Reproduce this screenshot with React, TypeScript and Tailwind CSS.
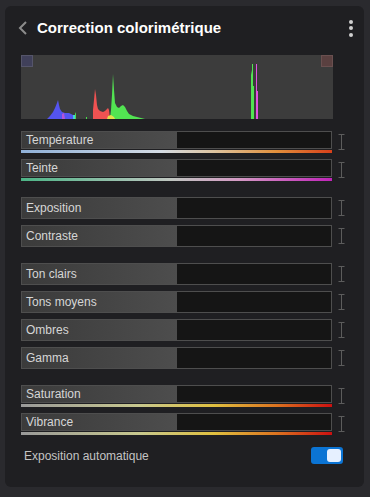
import { useState } from 'react'

type Reglage = {
  label: string
  track?: string
}

const groupes: Reglage[][] = [
  [
    {
      label: 'Température',
      track: 'bg-[linear-gradient(to_right,#8fb0d8,#d4dbe4_45%,#dcc3a0_62%,#e2903c_82%,#d8401a)]',
    },
    {
      label: 'Teinte',
      track: 'bg-[linear-gradient(to_right,#4cb486,#bfc6c0_48%,#d49ac4_70%,#c024b8)]',
    },
  ],
  [{ label: 'Exposition' }, { label: 'Contraste' }],
  [{ label: 'Ton clairs' }, { label: 'Tons moyens' }, { label: 'Ombres' }, { label: 'Gamma' }],
  [
    {
      label: 'Saturation',
      track: 'bg-[linear-gradient(to_right,#9a9a9a,#c8c88e_38%,#e0c040_62%,#dc7420_82%,#cc1010)]',
    },
    {
      label: 'Vibrance',
      track: 'bg-[linear-gradient(to_right,#9a9a9a,#c8c88e_38%,#e0c040_62%,#dc7420_82%,#cc1010)]',
    },
  ],
]

function IBeam() {
  return (
    <svg width="9" height="16" viewBox="0 0 9 16" className="shrink-0">
      <path d="M1.5 0.5h6M4.5 0.5v15M1.5 15.5h6" stroke="#5c5c5c" strokeWidth="1" fill="none" />
    </svg>
  )
}

function Histogramme() {
  return (
    <div className="relative w-[312px] h-[64px] bg-[#3c3c3c]">
      <svg width="312" height="64" viewBox="0 0 312 64" className="absolute inset-0">
        {/* bleu */}
        <path
          d="M26,64 L29,61 L32,57 L34,53 L36,48 L37,45 L38,50 L39,54 L41,57 L44,58 L48,58 L50,59 L52,60 L53,64 Z"
          fill="#5454f0"
        />
        <path d="M41,64 L41,59 L43,58 L44,64 Z" fill="#b454d8" />
        <path d="M52,64 L52,60 L54,60 L54,64 Z" fill="#44d0d8" />
        <path d="M54,64 L54,59 L55,57 L55,64 Z" fill="#48e048" />
        <path d="M65,64 L65,62 L66,62 L66,64 Z" fill="#48e048" />
        {/* rouge */}
        <path
          d="M72,64 L72,55 L73,45 L74,34 L75,40 L76,50 L77,54 L79,56 L82,57 L84,56 L86,54 L87,53 L88,55 L89,64 Z"
          fill="#f05252"
        />
        {/* vert */}
        <path
          d="M89,64 L90,55 L91,40 L92,19 L93,35 L94,48 L96,52 L98,53 L100,51 L102,50 L104,52 L106,56 L108,59 L112,61 L116,62 L120,63 L124,64 Z"
          fill="#52e452"
        />
        <path d="M86,64 L87,61 L90,60 L93,62 L94,64 Z" fill="#e4e048" />
        {/* pics à droite */}
        <path d="M230,64 L230,20 L231,15 L231,9 L232,9 L232,31 L233,31 L233,64 Z" fill="#52e452" />
        <path d="M235,64 L235,9 L236,9 L236,36 L237,36 L237,64 Z" fill="#e252e2" />
      </svg>
      <div className="absolute left-0 top-0 w-[12px] h-[12px] bg-[#40405a] border border-[#55556a]" />
      <div className="absolute right-0 top-0 w-[12px] h-[12px] bg-[#5a4040] border border-[#6a5050]" />
    </div>
  )
}

function Curseur({ label, track }: Reglage) {
  return (
    <div className="flex items-center gap-[5px]">
      <div className="w-[312px] flex flex-col">
        <div
          className={`relative flex ${track ? 'h-[18px]' : 'h-[22px]'} border border-[#4e4e4e] bg-[#151515]`}
        >
          <div className="w-1/2 h-full bg-linear-to-r from-[#3b3b3b] to-[#4d4d4d]" />
          <span className="absolute inset-0 flex items-center pl-[4px] text-[12px] text-[#d6d6d6]">
            {label}
          </span>
        </div>
        {track && <div className={`mt-px h-[3px] ${track}`} />}
      </div>
      <IBeam />
    </div>
  )
}

export default function App() {
  const [auto, setAuto] = useState(true)

  return (
    <div className="w-[370px] h-[497px] bg-[#2a2a2e] pt-[6px] pl-[5px] pr-[6px] font-['Liberation_Sans',Arial,sans-serif]">
      <div className="h-[481px] rounded-md bg-[#1f1f22] pl-[16px] pr-[18px] pt-[12px]">
        {/* En-tête */}
        <div className="h-[20px] flex items-center">
          <svg width="10" height="14" viewBox="0 0 10 14" className="ml-[-3px]">
            <path d="M8 1 L2 7 L8 13" stroke="#8c8c8c" strokeWidth="2" fill="none" />
          </svg>
          <h1 className="ml-[9px] text-[15px] font-bold text-white">Correction colorimétrique</h1>
          <div className="ml-auto mr-[-7px] flex flex-col items-center gap-[2.5px]">
            <span className="w-[4px] h-[4px] rounded-full bg-[#d0d0d0]" />
            <span className="w-[4px] h-[4px] rounded-full bg-[#d0d0d0]" />
            <span className="w-[4px] h-[4px] rounded-full bg-[#d0d0d0]" />
          </div>
        </div>

        <div className="mt-[17px]">
          <Histogramme />
        </div>

        <div className="mt-[12px] flex flex-col gap-[16px]">
          {groupes.map((groupe, i) => (
            <div key={i} className="flex flex-col gap-[6px]">
              {groupe.map((r) => (
                <Curseur key={r.label} {...r} />
              ))}
            </div>
          ))}
        </div>

        {/* Exposition automatique */}
        <div className="mt-[12px] h-[17px] flex items-center justify-between pl-[3px] pr-[3px]">
          <span className="text-[12px] text-[#c4c4c4]">Exposition automatique</span>
          <button
            onClick={() => setAuto(!auto)}
            className={`w-[32px] h-[17px] rounded-[3px] p-[2px] flex ${auto ? 'justify-end bg-[#0b74d4]' : 'justify-start bg-[#444]'}`}
          >
            <span className="w-[14px] h-[13px] rounded-[3px] bg-[#e6f0ff]" />
          </button>
        </div>
      </div>
    </div>
  )
}
